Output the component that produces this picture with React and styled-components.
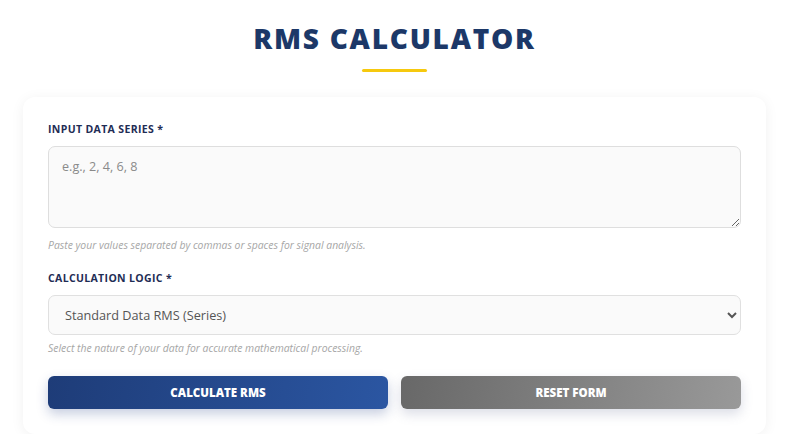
import React from "react";
import styled, { createGlobalStyle } from "styled-components";

const Global = createGlobalStyle`
  html, body { margin: 0; padding: 0; background: #ffffff; }
  body { font-family: "Poppins", "Open Sans", "Liberation Sans", sans-serif; }
  * { box-sizing: border-box; }
`;

const Page = styled.div`
  max-width: 743px;
  margin: 0 34px 0 23px;
  padding-top: 19px;
`;

const Header = styled.header`
  display: flex;
  flex-direction: column;
  align-items: center;
`;

const Title = styled.h1`
  margin: 0;
  font-family: "Open Sans", sans-serif;
  font-weight: 800;
  font-size: 28px;
  line-height: 38px;
  letter-spacing: 1.75px;
  color: #1c3868;
`;

const Underline = styled.div`
  width: 65px;
  height: 3px;
  border-radius: 2px;
  background: #f6c90e;
  margin-top: 12px;
`;

const Card = styled.section`
  margin-top: 25px;
  background: #fff;
  border-radius: 12px;
  box-shadow: 0 2px 14px rgba(0, 0, 0, 0.06);
  padding: 25px 25px 25px 25px;
`;

const Field = styled.div`
  display: flex;
  flex-direction: column;
  margin-bottom: ${(p) => p.$mb || 0}px;
`;

const Label = styled.label`
  font-family: "Open Sans", sans-serif;
  font-weight: 700;
  font-size: 10.5px;
  line-height: 15px;
  letter-spacing: 0.35px;
  color: #1f2d55;
  margin-bottom: 9px;
`;

const TextArea = styled.textarea`
  height: 82px;
  width: 100%;
  margin-bottom: 4px;
  border: 1.5px solid #dedede;
  border-radius: 7px;
  background: #fafafa;
  padding: 11px 13px;
  font-family: "Open Sans", sans-serif;
  font-size: 12.6px;
  color: #444;
  outline: none;
  resize: vertical;
  &::placeholder { color: #8a8a8a; }
`;

const Select = styled.select`
  height: 40px;
  width: 100%;
  border: 1.5px solid #e0e0e0;
  border-radius: 7px;
  background: #fafafa;
  padding: 0 8px 0 12px;
  font-family: "Open Sans", sans-serif;
  font-size: 12.7px;
  color: #555;
  outline: none;
`;

const Help = styled.p`
  margin: 6px 0 0;
  font-family: "Open Sans", sans-serif;
  font-style: italic;
  font-size: 10.4px;
  line-height: 14px;
  color: #a6a6a6;
`;

const Actions = styled.div`
  display: flex;
  gap: 13px;
`;

const Button = styled.button`
  flex: 1;
  height: 33px;
  border: none;
  border-radius: 6px;
  color: #fff;
  font-family: "Open Sans", sans-serif;
  font-weight: 800;
  font-size: 11.5px;
  letter-spacing: 0;
  cursor: pointer;
  background: ${(p) =>
    p.$variant === "secondary"
      ? "linear-gradient(100deg, #686868 0%, #999999 100%)"
      : "linear-gradient(100deg, #1e3c78 0%, #2b56a2 100%)"};
  box-shadow: ${(p) =>
    p.$variant === "secondary"
      ? "0 5px 12px rgba(90, 100, 140, 0.22)"
      : "0 5px 12px rgba(30, 60, 130, 0.25)"};
`;

export default function App() {
  return (
    <>
      <Global />
      <Page>
        <Header>
          <Title>RMS CALCULATOR</Title>
          <Underline />
        </Header>
        <Card>
          <Field $mb={19}>
            <Label>INPUT DATA SERIES *</Label>
            <TextArea placeholder="e.g., 2, 4, 6, 8" />
            <Help>Paste your values separated by commas or spaces for signal analysis.</Help>
          </Field>
          <Field $mb={21}>
            <Label>CALCULATION LOGIC *</Label>
            <Select defaultValue="series">
              <option value="series">Standard Data RMS (Series)</option>
              <option value="sine">Sine Wave (Peak to RMS)</option>
            </Select>
            <Help>Select the nature of your data for accurate mathematical processing.</Help>
          </Field>
          <Actions>
            <Button>CALCULATE RMS</Button>
            <Button $variant="secondary">RESET FORM</Button>
          </Actions>
        </Card>
      </Page>
    </>
  );
}
